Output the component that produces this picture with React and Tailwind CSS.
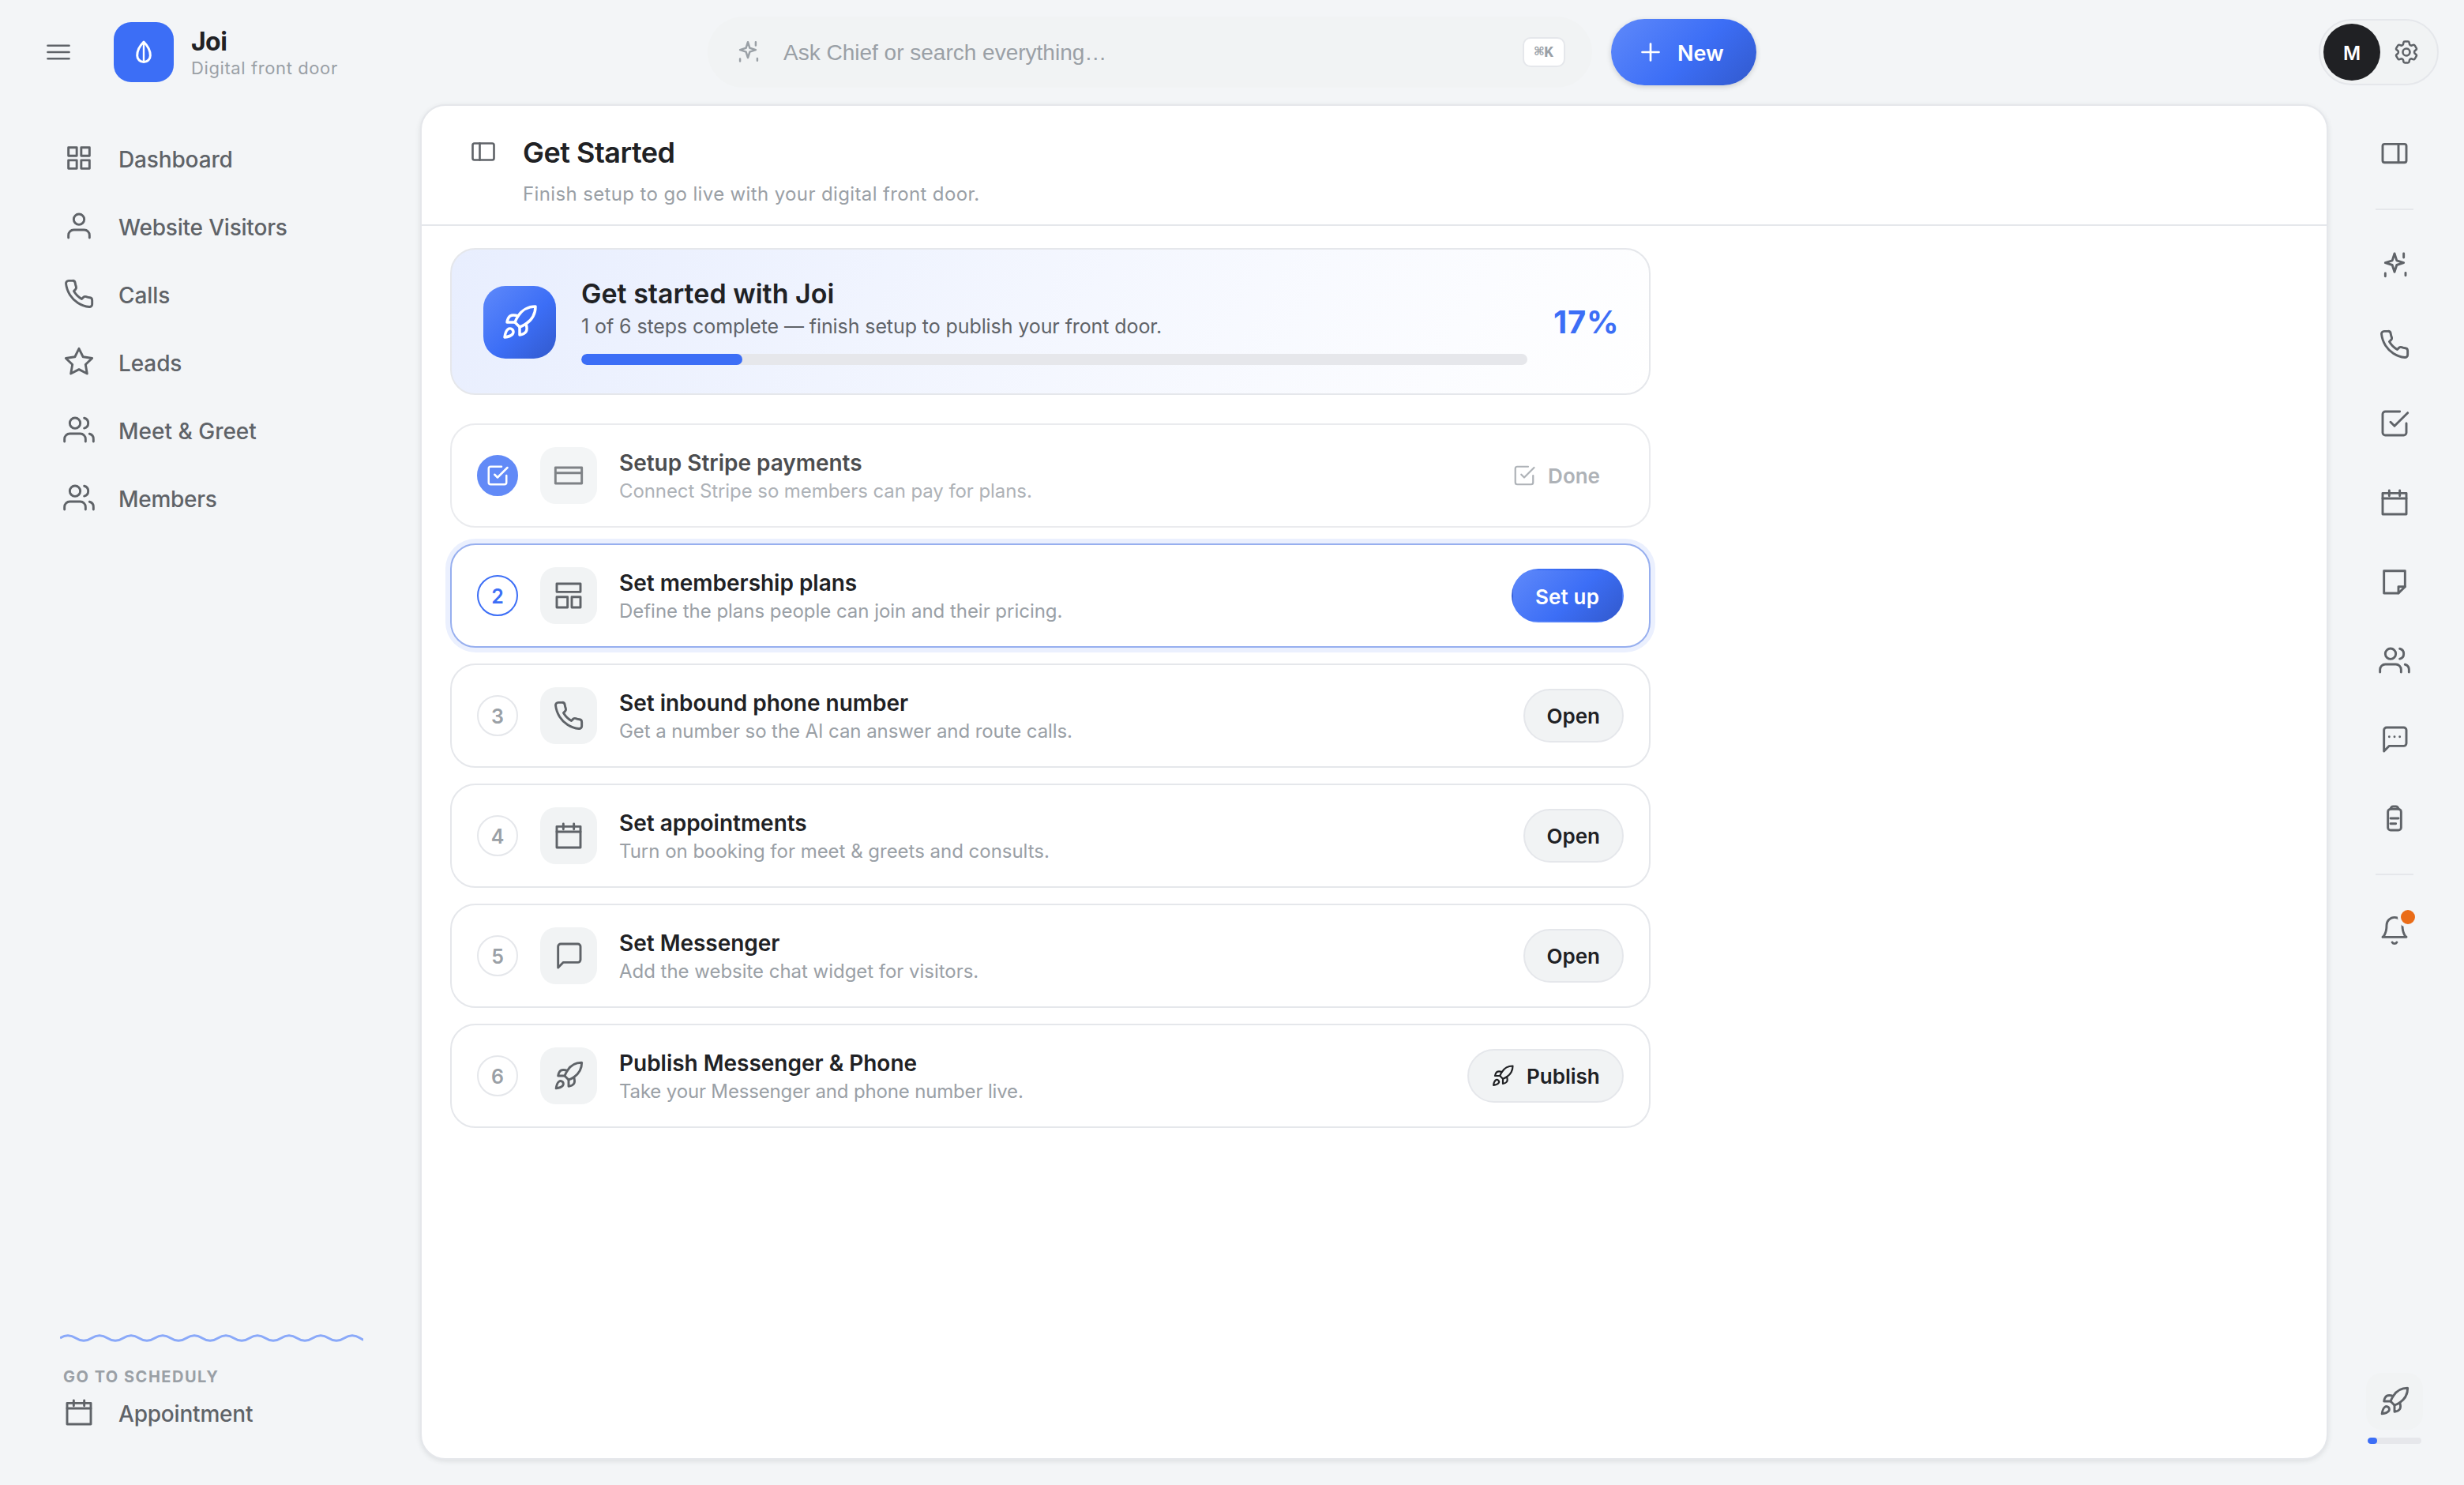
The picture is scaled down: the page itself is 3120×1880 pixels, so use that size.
import { HiOutlineCog6Tooth } from 'react-icons/hi2';
import clsx from 'clsx';

const icons = {
  menu: <path d="M3 6.5h18M3 12h18M3 17.5h18" />,
  dashboard: (
    <>
      <rect x="4" y="4" width="6.3" height="6.3" />
      <rect x="13.7" y="4" width="6.3" height="6.3" />
      <rect x="4" y="13.7" width="6.3" height="6.3" />
      <rect x="13.7" y="13.7" width="6.3" height="6.3" />
    </>
  ),
  user: (
    <>
      <path d="M20 21v-2a4 4 0 0 0-4-4H8a4 4 0 0 0-4 4v2" />
      <circle cx="12" cy="7" r="4" />
    </>
  ),
  phone: (
    <path d="M22 16.92v3a2 2 0 0 1-2.18 2 19.79 19.79 0 0 1-8.63-3.07 19.5 19.5 0 0 1-6-6 19.79 19.79 0 0 1-3.07-8.67A2 2 0 0 1 4.11 2h3a2 2 0 0 1 2 1.72 12.84 12.84 0 0 0 .7 2.81 2 2 0 0 1-.45 2.11L8.09 9.91a16 16 0 0 0 6 6l1.27-1.27a2 2 0 0 1 2.11-.45 12.84 12.84 0 0 0 2.81.7A2 2 0 0 1 22 16.92z" />
  ),
  star: <path d="M12 2l3.09 6.26L22 9.27l-5 4.87 1.18 6.88L12 17.77l-6.18 3.25L7 14.14 2 9.27l6.91-1.01L12 2z" />,
  users: (
    <>
      <path d="M17 21v-2a4 4 0 0 0-4-4H5a4 4 0 0 0-4 4v2" />
      <circle cx="9" cy="7" r="4" />
      <path d="M23 21v-2a4 4 0 0 0-3-3.87M16 3.13a4 4 0 0 1 0 7.75" />
    </>
  ),
  calendar: (
    <>
      <rect x="3" y="5" width="18" height="16" />
      <path d="M3 9h18M8 3v4M16 3v4" />
    </>
  ),
  sparkle: (
    <>
      <path d="M12 3l1.7 5.3L19 10l-5.3 1.7L12 17l-1.7-5.3L5 10l5.3-1.7L12 3z" />
      <path d="M19 3v3M5 18v2.2M20.4 17.6v2" />
    </>
  ),
  check: (
    <>
      <path d="M9 11l3 3L22 4" />
      <path d="M21 12v7a2 2 0 0 1-2 2H5a2 2 0 0 1-2-2V5a2 2 0 0 1 2-2h11" />
    </>
  ),
  panelRight: (
    <>
      <rect x="3" y="5" width="18" height="14" rx="1.5" />
      <path d="M15 5v14" />
    </>
  ),
  panelLeft: (
    <>
      <rect x="3" y="5" width="18" height="14" rx="1.5" />
      <path d="M9 5v14" />
    </>
  ),
  note: (
    <>
      <path d="M4 4h16v12l-5 5H4z" />
      <path d="M15 21v-5h5" />
    </>
  ),
  chat: <path d="M21 15a2 2 0 0 1-2 2H8l-4 4V5a2 2 0 0 1 2-2h13a2 2 0 0 1 2 2z" />,
  chatDots: (
    <>
      <path d="M21 15a2 2 0 0 1-2 2H8l-4 4V5a2 2 0 0 1 2-2h13a2 2 0 0 1 2 2z" />
      <path d="M8 10h.01M12 10h.01M16 10h.01" />
    </>
  ),
  clipboard: (
    <>
      <rect x="7" y="5" width="10" height="16" rx="2" />
      <path d="M9 5a2 2 0 0 1 2-2h2a2 2 0 0 1 2 2M9 12h6M9 16h4" />
    </>
  ),
  bell: (
    <>
      <path d="M18 8A6 6 0 0 0 6 8c0 7-3 9-3 9h18s-3-2-3-9" />
      <path d="M13.73 21a2 2 0 0 1-3.46 0" />
    </>
  ),
  rocket: (
    <>
      <path d="M4.5 16.5c-1.5 1.26-2 5-2 5s3.74-.5 5-2c.71-.84.7-2.13-.09-2.91a2.18 2.18 0 0 0-2.91-.09z" />
      <path d="M12 15l-3-3a22 22 0 0 1 2-3.95A12.88 12.88 0 0 1 22 2c0 2.72-.78 7.5-6 11a22.35 22.35 0 0 1-4 2z" />
      <path d="M9 12H4s.55-3.03 2-4c1.62-1.08 5 0 5 0M12 15v5s3.03-.55 4-2c1.08-1.62 0-5 0-5" />
    </>
  ),
  card: (
    <>
      <rect x="2" y="6" width="20" height="12" />
      <path d="M2 10h20" />
    </>
  ),
  layout: (
    <>
      <rect x="3" y="3" width="18" height="6.2" />
      <rect x="3" y="13" width="8.2" height="8" />
      <rect x="14.4" y="13" width="6.6" height="8" />
    </>
  ),
  plus: <path d="M12 5v14M5 12h14" />,
};

function Icon({ name, size = 40, stroke = 1.75, className }) {
  return (
    <svg
      width={size}
      height={size}
      viewBox="0 0 24 24"
      fill="none"
      stroke="currentColor"
      strokeWidth={stroke}
      strokeLinecap="round"
      strokeLinejoin="round"
      className={clsx('shrink-0', className)}
    >
      {icons[name]}
    </svg>
  );
}

const navItems = [
  { label: 'Dashboard', icon: 'dashboard', tracking: 'tracking-[-0.15px]' },
  { label: 'Website Visitors', icon: 'user', tracking: 'tracking-[-0.2px]' },
  { label: 'Calls', icon: 'phone', tracking: 'tracking-[-0.1px]' },
  { label: 'Leads', icon: 'star', tracking: 'tracking-[-0.1px]' },
  { label: 'Meet & Greet', icon: 'users', tracking: 'tracking-normal' },
  { label: 'Members', icon: 'users', tracking: 'tracking-[-0.3px]' },
];

const railItems = ['sparkle', 'phone', 'check', 'calendar', 'note', 'users', 'chatDots', 'clipboard'];

const steps = [
  { title: 'Setup Stripe payments', text: 'Connect Stripe so members can pay for plans.', icon: 'card', state: 'done', tracking: 'tracking-[-0.08px]' },
  { title: 'Set membership plans', text: 'Define the plans people can join and their pricing.', icon: 'layout', state: 'current', tracking: 'tracking-[-0.03px]' },
  { title: 'Set inbound phone number', text: 'Get a number so the AI can answer and route calls.', icon: 'phone', state: 'open', tracking: 'tracking-[-0.08px]' },
  { title: 'Set appointments', text: 'Turn on booking for meet & greets and consults.', icon: 'calendar', state: 'open', tracking: 'tracking-[-0.02px]' },
  { title: 'Set Messenger', text: 'Add the website chat widget for visitors.', icon: 'chat', state: 'open', tracking: 'tracking-[-0.03px]' },
  { title: 'Publish Messenger & Phone', text: 'Take your Messenger and phone number live.', icon: 'rocket', state: 'publish', tracking: 'tracking-[-0.16px]' },
];

const progress = 17;

function NavItem({ label, icon, tracking }) {
  return (
    <a className="flex h-[86px] items-center gap-[30px] pl-20 text-[28px] font-medium text-[#5f6368]">
      <Icon name={icon} />
      <span className={clsx('pt-1 whitespace-nowrap', tracking)}>{label}</span>
    </a>
  );
}

function TopBar() {
  return (
    <header className="grid h-[132px] shrink-0 grid-cols-[896px_1fr_896px] items-center">
      <div className="flex items-center pl-14">
        <Icon name="menu" size={36} stroke={1.8} className="text-[#5f6368]" />
        <div className="ml-[52px] flex size-19 items-center justify-center rounded-[22px] bg-[#3c6ef6] text-white">
          <svg width="24" height="32" viewBox="0 0 24 32" fill="none" stroke="currentColor" strokeLinejoin="round">
            <path d="M12 3C8.5 6.5 3.7 13.5 3.7 20.2a8.3 8.3 0 0 0 16.6 0C20.3 13.5 15.5 6.5 12 3z" strokeWidth="3" />
            <path d="M12 4v24" strokeWidth="2.4" />
          </svg>
        </div>
        <div className="ml-[22px]">
          <div className="text-[32px] leading-10 font-bold tracking-[-0.6px] text-[#202124]">Joi</div>
          <div className="text-[22px] leading-[27px] tracking-[0.6px] text-[#9aa0a6]">Digital front door</div>
        </div>
      </div>

      <div className="flex items-center gap-6">
        <div className="flex h-[90px] flex-1 items-center rounded-full bg-[#f1f3f4] pr-[34px] pl-[34px] text-[#9aa0a6]">
          <Icon name="sparkle" size={34} />
          <span className="ml-7 flex-1 pt-[2px] font-['Liberation_Sans',Arial,sans-serif] text-[28px]">
            Ask Chief or search everything…
          </span>
          <kbd className="flex h-[38px] w-[54px] items-center justify-center rounded-[10px] border-2 border-[#e5e7eb] bg-white pt-[2px] font-['Liberation_Mono','DejaVu_Sans_Mono',monospace] text-[20px] font-bold">
            ⌘K
          </kbd>
        </div>
        <button className="flex h-[84px] w-[184px] items-center gap-4 rounded-full bg-[linear-gradient(135deg,#5f89fa_0%,#3c6ef6_55%,#3259cc_100%)] pl-8 text-[27px] font-semibold text-white shadow-[0_2px_6px_rgba(60,64,67,0.22)]">
          <Icon name="plus" size={36} stroke={1.8} />
          <span className="pt-[5px]">New</span>
        </button>
      </div>

      <div className="flex justify-end pr-8">
        <div className="flex h-[84px] w-[152px] items-center gap-[15px] rounded-full border-2 border-[#e5e7eb] bg-[#f1f3f4] pl-1">
          <div className="flex size-18 items-center justify-center rounded-full bg-[#202124] pt-[3px] text-2xl font-semibold text-white">M</div>
          <HiOutlineCog6Tooth className="size-9 text-[#5f6368]" strokeWidth="1.7" />
        </div>
      </div>
    </header>
  );
}

// one crest or trough every 20px, clipped by the svg box
const wave = 'M0 6q10-6.6 20 0' + 't20 0'.repeat(19);

function Sidebar() {
  return (
    <aside className="flex w-[532px] shrink-0 flex-col pt-[25px] pb-[59px]">
      <nav className="flex-1">
        {navItems.map((item) => (
          <NavItem key={item.label} {...item} />
        ))}
      </nav>
      <svg width="384" height="12" viewBox="0 0 384 12" fill="none" className="ml-19">
        <path d={wave} stroke="#8aa9f9" strokeWidth="3" />
      </svg>
      <div className="mt-[31px] pl-20 text-[20px] leading-6 font-bold tracking-[1.5px] text-[#9aa0a6]">GO TO SCHEDULY</div>
      <a className="flex h-[66px] items-center gap-[30px] pl-20 text-[28px] font-medium tracking-[-0.2px] text-[#5f6368]">
        <Icon name="calendar" />
        <span className="pt-1">Appointment</span>
      </a>
    </aside>
  );
}

function StepAction({ state }) {
  const base = 'flex h-[68px] items-center gap-[15px] rounded-full border-2 px-7 text-[26px] font-semibold';
  if (state === 'done') {
    return (
      <span className={clsx(base, 'border-transparent text-[#9aa0a6]')}>
        <Icon name="check" size={30} />
        <span className="pt-px">Done</span>
      </span>
    );
  }
  if (state === 'current') {
    return (
      <button className={clsx(base, 'w-[142px] border-transparent bg-[linear-gradient(135deg,#5f89fa_0%,#3c6ef6_55%,#3259cc_100%)] tracking-[0.15px] text-white')}>
        <span className="pt-[2px]">Set up</span>
      </button>
    );
  }
  return (
    <button className={clsx(base, 'border-[#e5e7eb] bg-[#f1f3f4] text-[#202124]', state === 'publish' && 'w-[198px]')}>
      {state === 'publish' && <Icon name="rocket" size={30} />}
      <span className="pt-px">{state === 'publish' ? 'Publish' : 'Open'}</span>
    </button>
  );
}

function StepRow({ step, number }) {
  const done = step.state === 'done';
  const current = step.state === 'current';
  return (
    <div
      className={clsx(
        'flex h-[132px] items-center gap-7 rounded-[32px] border-2 bg-white px-8',
        current ? 'border-[#97afef] shadow-[0_0_0_6px_#ebf0fe]' : 'border-[#e5e7eb]',
        done && 'opacity-80'
      )}
    >
      <div
        className={clsx(
          'flex size-[52px] shrink-0 items-center justify-center rounded-full border-2 text-[25px] font-semibold',
          done && 'border-[#3c6ef6] bg-[#3c6ef6] text-white',
          current && 'border-[#3c6ef6] text-[#3c6ef6]',
          !done && !current && 'border-[#e5e7eb] text-[#9aa0a6]'
        )}
      >
        {done ? <Icon name="check" size={30} stroke={2} /> : <span className="pt-[3px]">{number}</span>}
      </div>
      <div className="flex size-18 shrink-0 items-center justify-center rounded-[20px] bg-[#f1f3f4] text-[#5f6368]">
        <Icon name={step.icon} />
      </div>
      <div className="flex-1 pt-[2px]">
        <div className="text-[28px] leading-9 font-semibold tracking-[-0.02px] text-[#202124]">{step.title}</div>
        <div className={clsx('pt-px text-[24px] leading-[34px] text-[#9aa0a6]', step.tracking)}>{step.text}</div>
      </div>
      <StepAction state={step.state} />
    </div>
  );
}

function Main() {
  return (
    <main className="flex-1 overflow-hidden rounded-[32px] border-2 border-[#e5e7eb] bg-white shadow-[0_2px_6px_rgba(60,64,67,0.12)]">
      <div className="flex h-[152px] border-b-2 border-[#e5e7eb] pt-[37px] pl-[60px]">
        <Icon name="panelLeft" size={36} className="mt-[3px] text-[#5f6368]" />
        <div className="ml-8">
          <h1 className="text-[36px] leading-11 font-semibold tracking-[-0.5px] text-[#202124]">Get Started</h1>
          <p className="mt-[13px] text-[24px] leading-9 tracking-[0.37px] text-[#9aa0a6]">
            Finish setup to go live with your digital front door.
          </p>
        </div>
      </div>

      <div className="w-[1556px] pt-7 pl-9">
        <section className="flex h-[186px] items-center gap-8 rounded-[32px] border-2 border-[#e5e7eb] bg-[linear-gradient(120deg,#e8eefe_0%,#ffffff_100%)] px-10 pt-[2px]">
          <div className="flex size-[92px] shrink-0 items-center justify-center rounded-[28px] bg-[linear-gradient(135deg,#5f89fa_0%,#3c6ef6_55%,#3259cc_100%)] text-white">
            <Icon name="rocket" size={48} />
          </div>
          <div className="-mt-[2px] flex-1">
            <h2 className="text-[34px] leading-10 font-semibold text-[#202124]">Get started with Joi</h2>
            <p className="mt-1 text-[25px] leading-[34px] tracking-[-0.09px] text-[#5f6368]">
              1 of 6 steps complete — finish setup to publish your front door.
            </p>
            <div className="mt-[18px] h-[14px] overflow-hidden rounded-full bg-[#e6e7eb]">
              <div className="h-full rounded-full bg-[#3c6ef6]" style={{ width: `${progress}%` }} />
            </div>
          </div>
          <div className="w-[82px] pl-px text-[40px] leading-none font-bold tracking-[0.8px] text-[#3c6ef6]">{progress}%</div>
        </section>

        <div className="mt-9 flex flex-col gap-5">
          {steps.map((step, i) => (
            <StepRow key={step.title} step={step} number={i + 1} />
          ))}
        </div>
      </div>
    </main>
  );
}

function Rail() {
  const cell = 'flex h-[100px] items-center justify-center';
  return (
    <aside className="mr-1 flex w-[168px] shrink-0 flex-col items-center pt-3 pb-[52px] text-[#5f6368]">
      <div className={cell}>
        <Icon name="panelRight" />
      </div>
      <div className="my-5 h-[2px] w-12 bg-[#e5e7eb]" />
      {railItems.map((name) => (
        <div key={name} className={cell}>
          <Icon name={name} />
        </div>
      ))}
      <div className="my-5 h-[2px] w-12 bg-[#e5e7eb]" />
      <div className={cell}>
        <div className="relative">
          <Icon name="bell" />
          <span className="absolute -top-[10px] -right-[10px] size-[26px] rounded-full border-4 border-[#f3f5f7] bg-[#ea6c18]" />
        </div>
      </div>
      <div className="mt-auto flex size-18 items-center justify-center rounded-[20px] bg-[#f1f3f4]">
        <Icon name="rocket" />
      </div>
      <div className="mt-[10px] h-2 w-[68px] overflow-hidden rounded-full bg-[#e6e7eb]">
        <div className="h-full rounded-full bg-[#3c6ef6]" style={{ width: `${progress}%` }} />
      </div>
    </aside>
  );
}

export default function App() {
  return (
    <div className="flex h-[1880px] w-[3120px] flex-col overflow-hidden bg-[#f3f5f7] font-['Inter','Noto_Sans',sans-serif]">
      <TopBar />
      <div className="flex min-h-0 flex-1">
        <Sidebar />
        <div className="flex flex-1 pb-8">
          <Main />
        </div>
        <Rail />
      </div>
    </div>
  );
}
